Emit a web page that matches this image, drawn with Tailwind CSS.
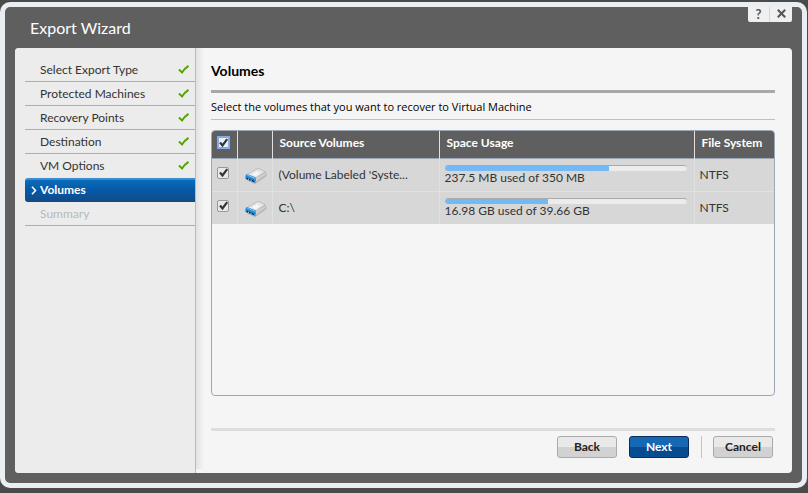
<!DOCTYPE html>
<html lang="en">
<head>
    <meta charset="UTF-8">
    <meta name="viewport" content="width=device-width, initial-scale=1.0">
    <title>Export Wizard</title>
    <script src="https://cdn.jsdelivr.net/npm/@tailwindcss/browser@4"></script>
</head>
<body class="h-screen overflow-hidden bg-[#4a4a4a] pt-[2px] pr-px font-['Lato',sans-serif] text-[12px] leading-4 text-[#333] flex flex-col">
    <!-- reused icons -->
    <svg class="hidden">
        <symbol id="check" viewBox="0 0 12 10">
            <path d="M1 4.500 4 7.500Q6.500 3.500 10.500 .8" fill="none" stroke="#57a30d" stroke-width="2"/>
        </symbol>
        <symbol id="tick" viewBox="0 0 11 11">
            <path d="M2 5.500 4.500 8.500 9.200 2.200" fill="none" stroke="#333340" stroke-width="2.200"/>
        </symbol>
        <symbol id="drive" viewBox="0 0 24 18">
            <path d="M3 13.500 11 17.300 22.500 9V7z" fill="#888" opacity=".4"/>
            <path d="M2 8 12.500 1.800Q14 1 15.500 1.600L20.500 4Q22.300 5 22.300 6.500L21.700 8.500 11.500 15.500z" fill="#b2b2b6"/>
            <path d="M4 7.500 12.500 2.400Q14 1.700 15.500 2.300L20.500 4.700 12 10.500z" fill="#e6e6e9"/>
            <path d="M8 7.500 13 4.500 16 6 12 9z" fill="#f8f8fa"/>
            <path d="M12 11 21.500 5.300V8L11.500 15z" fill="#cfcfd2"/>
            <path d="M1.500 8.800Q2 7 4 7.400L12 10.800 11.300 16 2.500 12.500Q1.300 12 1.300 11z" fill="#1f8ad6"/>
            <path d="M2.500 10.600 10 13.700V15L2.800 12z" fill="#14243a"/>
            <path d="M4 12 5 12.400M6.500 13 7.500 13.500" stroke="#cfe8fa" fill="none"/>
            <path d="M3 8 11.500 11.600" stroke="#7cc6f2" fill="none"/>
        </symbol>
    </svg>

    <div class="flex flex-col flex-1 mb-[5px] border-5 border-[#eaeef2] rounded-[10px] bg-[#5f5f5f]">
        <header class="flex justify-between h-[41px] pl-[25px] pr-[10px] rounded-t-md">
            <h1 class="pt-[11px] text-[16px] leading-5 text-white">Export Wizard</h1>
            <div class="flex h-[15px] rounded-b-xs bg-[#f0f0f0] text-[#555]">
                <button type="button" aria-label="Help" class="w-[22px] border-r border-[#d8d8d8] text-[13px] leading-[13px] font-bold">?</button>
                <button type="button" aria-label="Close" class="w-[22px] flex items-center justify-center pb-[2px]">
                    <svg class="w-[9px] h-[9px]" viewBox="0 0 9 9"><path d="M.8.8 8.200 8.200M8.200.8.8 8.200" stroke="#555" stroke-width="2"/></svg>
                </button>
            </div>
        </header>

        <div class="flex flex-1 mx-[10px] mb-[10px] rounded-[4px] bg-[#f5f5f5] overflow-hidden">
            <nav class="w-[181px] shrink-0 pl-[10px] pt-[10px] bg-[#ececec] border-r border-[#bcbcbc]">
                <ol>
                    <li class="flex items-center justify-between h-6 pl-[15px] pr-[5px] border-b border-[#adadad]">Select Export Type <svg class="w-3 h-[10px]"><use href="#check"/></svg></li>
                    <li class="flex items-center justify-between h-6 pl-[15px] pr-[5px] border-b border-[#adadad]">Protected Machines <svg class="w-3 h-[10px]"><use href="#check"/></svg></li>
                    <li class="flex items-center justify-between h-6 pl-[15px] pr-[5px] border-b border-[#adadad]">Recovery Points <svg class="w-3 h-[10px]"><use href="#check"/></svg></li>
                    <li class="flex items-center justify-between h-6 pl-[15px] pr-[5px] border-b border-[#adadad]">Destination <svg class="w-3 h-[10px]"><use href="#check"/></svg></li>
                    <li class="flex items-center justify-between h-6 pl-[15px] pr-[5px]">VM Options <svg class="w-3 h-[10px]"><use href="#check"/></svg></li>
                    <li aria-current="step" class="flex items-center gap-[3px] h-6 pl-[6px] pb-[2px] rounded-l-[3px] border-t-2 border-[#3a8ccc] bg-linear-to-b from-[#0b6cbc] via-[#0558a5] to-[#124a84] text-white font-bold">
                        <svg class="w-[6px] h-[9px]" viewBox="0 0 6 9"><path d="M1 .8 4.500 4.500 1 8.200" fill="none" stroke="#fff" stroke-width="1.600"/></svg>Volumes
                    </li>
                    <li class="flex items-center h-6 pl-[15px] border-b border-[#adadad] text-[#b4bbb8]">Summary</li>
                </ol>
            </nav>
            <div class="w-2 mb-1 shrink-0 bg-linear-to-r from-[#e2e2e2] to-[#f5f5f5]"></div>

            <main class="flex flex-col flex-1 min-w-0 pl-[7px] pr-[17px] text-black">
                <h2 class="h-[45px] pt-[14px] text-[14px] leading-[18px] font-bold border-b-3 border-[#a8a8a8]">Volumes</h2>
                <p class="h-[27px] pt-[6px] border-b border-[#bfbfbf] font-['Open_Sans',sans-serif] text-[11px]">Select the volumes that you want to recover to Virtual Machine</p>

                <div class="flex-1 mt-[10px] border border-[#9ea7b6] rounded-[4px] overflow-hidden">
                    <table class="w-full table-fixed text-left text-[#333]">
                        <colgroup><col class="w-[25px]"><col class="w-[35px]"><col class="w-[167px]"><col><col class="w-[80px]"></colgroup>
                        <thead class="bg-[#5f5f5f] text-white">
                            <tr class="h-[27px] border-b border-[#9ea7b6]">
                                <th class="pb-[4px] pr-[2px] border-r border-[#e0e0e0]">
                                    <label class="grid place-items-center">
                                        <input type="checkbox" checked aria-label="Select all" class="peer col-start-1 row-start-1 appearance-none w-[13px] h-[13px] bg-[#eee] border-2 border-[#7fadea]">
                                        <svg class="col-start-1 row-start-1 w-[11px] h-[11px] invisible peer-checked:visible pointer-events-none"><use href="#tick"/></svg>
                                    </label>
                                </th>
                                <th class="border-r border-[#e0e0e0]"></th>
                                <th class="px-[7px] pb-[2px] border-r border-[#e0e0e0]">Source Volumes</th>
                                <th class="px-[7px] pb-[2px] border-r border-[#e0e0e0]">Space Usage</th>
                                <th class="pl-[7px] pb-[2px] whitespace-nowrap">File System</th>
                            </tr>
                        </thead>
                        <tbody class="bg-[#d7d7d7]">
                            <tr class="h-[33px] border-b border-[#dfe1e4]">
                                <td class="pb-[4px] pr-[2px] border-r border-[#dfe1e4]">
                                    <label class="grid place-items-center">
                                        <input type="checkbox" checked aria-label="System volume" class="peer col-start-1 row-start-1 appearance-none w-[12px] h-[12px] rounded-xs border border-[#999] bg-[#e8e8e8]">
                                        <svg class="col-start-1 row-start-1 w-[11px] h-[11px] invisible peer-checked:visible pointer-events-none"><use href="#tick"/></svg>
                                    </label>
                                </td>
                                <td class="pt-[2px] border-r border-[#dfe1e4]"><svg class="w-6 h-[18px] ml-[6px]"><use href="#drive"/></svg></td>
                                <td class="px-[6px] border-r border-[#dfe1e4]">(Volume Labeled 'Syste...</td>
                                <td class="pl-[5px] pr-[7px] border-r border-[#dfe1e4] leading-[14px]">
                                    <div class="h-[6px] rounded-full border-t border-[#aaa] bg-[#ececec] overflow-hidden"><div class="h-full bg-[#72b9f5]" style="width: 67.8%"></div></div>
                                    237.5 MB used of 350 MB
                                </td>
                                <td class="pl-[5px]">NTFS</td>
                            </tr>
                            <tr class="h-[33px]">
                                <td class="pb-[4px] pr-[2px] border-r border-[#dfe1e4]">
                                    <label class="grid place-items-center">
                                        <input type="checkbox" checked aria-label="Volume C" class="peer col-start-1 row-start-1 appearance-none w-[12px] h-[12px] rounded-xs border border-[#999] bg-[#e8e8e8]">
                                        <svg class="col-start-1 row-start-1 w-[11px] h-[11px] invisible peer-checked:visible pointer-events-none"><use href="#tick"/></svg>
                                    </label>
                                </td>
                                <td class="pt-[2px] border-r border-[#dfe1e4]"><svg class="w-6 h-[18px] ml-[6px]"><use href="#drive"/></svg></td>
                                <td class="px-[6px] border-r border-[#dfe1e4]">C:\</td>
                                <td class="pl-[5px] pr-[7px] border-r border-[#dfe1e4] leading-[14px]">
                                    <div class="h-[6px] rounded-full border-t border-[#aaa] bg-[#ececec] overflow-hidden"><div class="h-full bg-[#72b9f5]" style="width: 42.8%"></div></div>
                                    16.98 GB used of 39.66 GB
                                </td>
                                <td class="pl-[5px]">NTFS</td>
                            </tr>
                        </tbody>
                    </table>
                </div>

                <footer class="flex justify-end gap-3 mt-8 pt-[5px] pb-[15px] pr-[2px] border-t-3 border-[#dedede] font-bold">
                    <button type="button" class="w-[60px] h-[22px] rounded-[3px] border border-[#aaa] bg-linear-to-b from-[#e9e9e9] from-50% to-[#d2d2d2] to-50% text-[#222]">Back</button>
                    <button type="button" class="w-[60px] h-[22px] rounded-[3px] border border-[#0a2c5c] bg-linear-to-b from-[#1768b3] from-50% to-[#064c90] to-50% text-white">Next</button>
                    <div class="w-px bg-[#c4c4c4]"></div>
                    <button type="button" class="w-[60px] h-[22px] -ml-px rounded-[3px] border border-[#aaa] bg-linear-to-b from-[#e9e9e9] from-50% to-[#d2d2d2] to-50% text-[#222]">Cancel</button>
                </footer>
            </main>
        </div>
    </div>
</body>
</html>
